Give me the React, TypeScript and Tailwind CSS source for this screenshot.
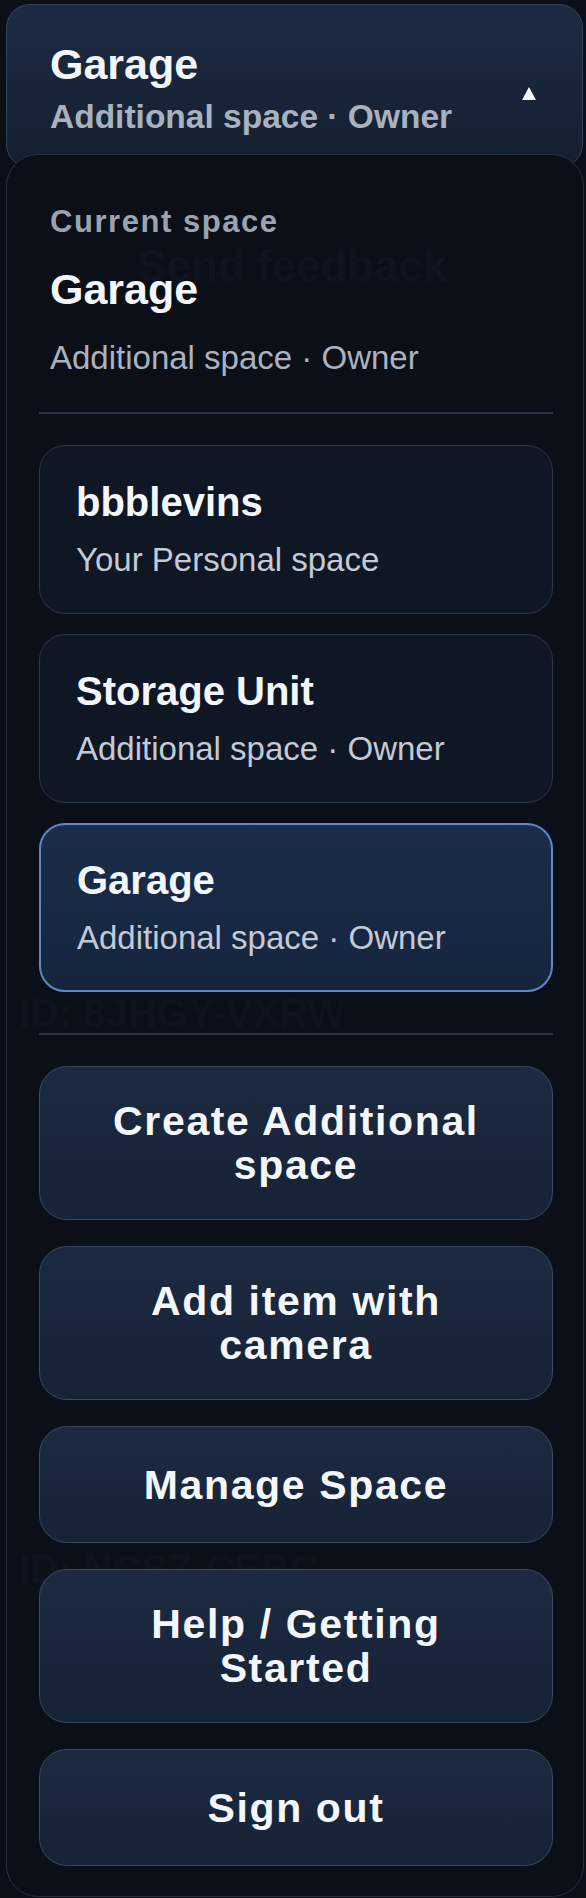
import React from "react";

type Space = { name: string; detail: string; selected?: boolean };

const spaces: Space[] = [
  { name: "bbblevins", detail: "Your Personal space" },
  { name: "Storage Unit", detail: "Additional space · Owner" },
  { name: "Garage", detail: "Additional space · Owner", selected: true },
];

const actions = [
  "Create Additional space",
  "Add item with camera",
  "Manage Space",
  "Help / Getting Started",
  "Sign out",
];

function SpaceCard({ space }: { space: Space }) {
  const base = "rounded-[26px] px-[36px] text-left";
  const look = space.selected
    ? "border-2 border-[#5d89c6] py-[31px] bg-gradient-to-b from-[#1b2d4a] to-[#15253e] shadow-[0_0_0_3px_rgba(10,16,28,0.9)]"
    : "border border-[#2c3749] py-[32px] bg-[#0f1724]";
  return (
    <div className={`${base} ${look}`}>
      <div className="text-[40px] leading-[48px] font-bold text-[#f3f6fb]">{space.name}</div>
      <div className="mt-[12px] text-[33px] leading-[43px] text-[#c3cad5]">{space.detail}</div>
    </div>
  );
}

function ActionButton({ label }: { label: string }) {
  return (
    <button className="flex min-h-[117px] w-full items-center justify-center rounded-[28px] border border-[#3b4a60] bg-gradient-to-b from-[#1c2a41] to-[#162235] px-[40px] py-[32px] text-center text-[41px] leading-[44px] font-bold tracking-[0.04em] text-[#f3f6fb]">
      {label}
    </button>
  );
}

export default function App() {
  return (
    <div className="min-h-screen bg-[#0b1018] pt-[4px] font-['Liberation_Sans',Arial,sans-serif]">
      {/* Trigger */}
      <div className="ml-[6px] mr-[3px] flex h-[164px] items-start justify-between rounded-[24px] border border-[#34445a] bg-gradient-to-b from-[#1d2b42] to-[#142031] pl-[43px] pr-[46px] pt-[34px]">
        <div>
          <div className="text-[43px] leading-[50px] font-bold text-[#f3f6fb]">Garage</div>
          <div className="mt-[8px] text-[33.5px] leading-[40px] font-bold text-[#a9b2bf]">Additional space · Owner</div>
        </div>
        <svg className="mt-[48px]" width="14" height="13" viewBox="0 0 14 13">
          <path d="M7 0 L14 13 L0 13 Z" fill="#f3f6fb" />
        </svg>
      </div>

      {/* Dropdown */}
      <div className="relative z-10 -mt-[14px] ml-[6px] mr-[2px] overflow-hidden rounded-[32px] border border-[#263244] bg-[#0a0f18] pb-[30px] pl-[32px] pr-[30px] pt-[49px]">
        {/* page content faintly showing through the menu */}
        <div className="pointer-events-none absolute left-[130px] top-[85px] text-[44px] leading-[52px] font-bold text-[#0f1520]">Send feedback</div>
        <div className="pointer-events-none absolute left-[12px] top-[834px] text-[40px] leading-[48px] font-bold text-[#0e141e]">ID: 8JHGY-VXRW</div>
        <div className="pointer-events-none absolute left-[12px] top-[1390px] text-[40px] leading-[48px] font-bold text-[#0e141e]">ID: NCSZ-CEBC</div>

        <div className="relative pl-[11px]">
          <div className="text-[31px] leading-[36px] font-bold tracking-[0.05em] text-[#9ba3b0]">Current space</div>
          <div className="mt-[24px] text-[43px] leading-[50px] font-bold text-[#f3f6fb]">Garage</div>
          <div className="mt-[24px] text-[33px] leading-[40px] text-[#aab2be]">Additional space · Owner</div>
        </div>

        <div className="relative mt-[34px] h-[2px] bg-[#283345]" />

        <div className="relative mt-[31px] flex flex-col gap-[20px]">
          {spaces.map((s) => (
            <SpaceCard key={s.name + s.detail} space={s} />
          ))}
        </div>

        <div className="relative mt-[41px] h-[2px] bg-[#283345]" />

        <div className="relative mt-[31px] flex flex-col gap-[26px]">
          {actions.map((a) => (
            <ActionButton key={a} label={a} />
          ))}
        </div>
      </div>
    </div>
  );
}
